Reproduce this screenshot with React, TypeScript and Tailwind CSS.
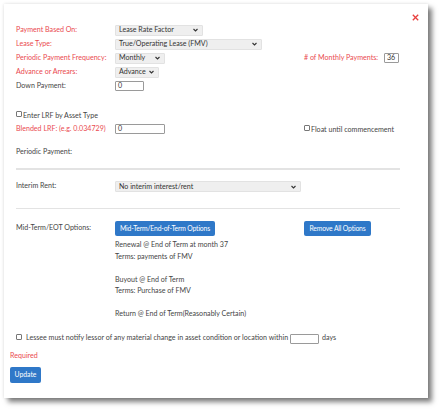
import React from "react";

const RED = "text-[#ea4a4f]";

function Chevron() {
  return (
    <svg width="5" height="4" viewBox="0 0 10 7" className="shrink-0">
      <path d="M1 1.5 L5 5.5 L9 1.5" fill="none" stroke="#333" strokeWidth="2.2" />
    </svg>
  );
}

function Select({ w, text }: { w: string; text: string }) {
  return (
    <div className={`${w} h-[11px] flex items-center justify-between gap-[2px] bg-[#efefef] border border-[#e2e2e2] rounded-[1px] pl-[3px] pr-[4px] text-[#333]`}>
      <span className="leading-none whitespace-nowrap">{text}</span>
      <Chevron />
    </div>
  );
}

function Input({ w, value }: { w: string; value?: string }) {
  return (
    <div className={`${w} h-[10px] flex items-center bg-white border border-[#9a9a9a] rounded-[1px] pl-[2px] text-[#333] leading-none`}>
      {value}
    </div>
  );
}

function Check() {
  return <div className="w-[6px] h-[6px] border border-[#777] rounded-[1px] bg-white shrink-0" />;
}

function Row({ label, red, children, h = "h-[14px]" }: { label: string; red?: boolean; children?: React.ReactNode; h?: string }) {
  return (
    <div className={`flex items-center ${h}`}>
      <div className={`w-[99px] shrink-0 whitespace-nowrap ${red ? RED : "text-[#454545]"}`}>{label}</div>
      {children}
    </div>
  );
}

function Button({ children, w }: { children: React.ReactNode; w: string }) {
  return (
    <div className={`${w} h-[15px] flex items-center justify-center bg-[#2f78c8] rounded-[2px] text-white text-[6.8px] whitespace-nowrap tracking-[-0.15px]`}>
      {children}
    </div>
  );
}

export default function App() {
  return (
    <div className="w-[440px] h-[410px] bg-white pt-[4px] pl-[4px]" style={{ fontFamily: "Lato, 'Open Sans', sans-serif" }}>
      <div className="relative w-[424px] h-[394px] bg-white shadow-[4px_4px_5px_rgba(0,0,0,0.5),0_0_3px_rgba(0,0,0,0.12)] text-[7.1px] text-[#454545] pl-[6px] pt-[19px]">
        <svg className="absolute right-[9px] top-[10px]" width="7" height="7" viewBox="0 0 7 7">
          <path d="M0.8 0.8 L6.2 6.2 M6.2 0.8 L0.8 6.2" stroke="#e8403f" strokeWidth="1.3" />
        </svg>
        <div className="pl-[6px] w-[390px]">
          <Row label="Payment Based On:" red>
            <Select w="w-[88px]" text="Lease Rate Factor" />
          </Row>
          <Row label="Lease Type:" red>
            <Select w="w-[147px]" text="True/Operating Lease (FMV)" />
          </Row>
          <div className="flex items-center h-[14px]">
            <div className="w-[288px] flex items-center">
              <div className={`w-[99px] whitespace-nowrap ${RED}`}>Periodic Payment Frequency:</div>
              <Select w="w-[50px]" text="Monthly" />
            </div>
            <div className={`${RED} w-[80px] whitespace-nowrap`}>
              # of Monthly Payments:
            </div>
            <Input w="w-[15px]" value="36" />
          </div>
          <Row label="Advance or Arrears:" red>
            <Select w="w-[44px]" text="Advance" />
          </Row>
          <Row label="Down Payment:">
            <Input w="w-[29px]" value="0" />
          </Row>
          <div className="h-[14px]" />
          <div className="flex items-end gap-[1px] h-[14px] pb-[2px]">
            <div className="mb-[2px]"><Check /></div>
            <span className="leading-none">Enter LRF by Asset Type</span>
          </div>
          <div className="flex items-center h-[16px]">
            <div className="w-[288px] flex items-center">
              <div className={`w-[99px] whitespace-nowrap ${RED}`}>Blended LRF: (e.g. 0.034729)</div>
              <Input w="w-[50px]" value="0" />
            </div>
            <div className="flex items-end gap-[1px]">
              <div className="mb-[2px]"><Check /></div>
              <span className="leading-none">Float until commencement</span>
            </div>
          </div>
          <div className="h-[8px]" />
          <Row label="Periodic Payment:" />
          <div className="h-[9px]" />
          <div className="h-[1.5px] w-[384px] bg-[#e3e3e3]" />
          <div className="h-[10px]" />
          <Row label="Interim Rent:">
            <Select w="w-[186px]" text="No interim interest/rent" />
          </Row>
          <div className="h-[14px]" />
          <div className="h-[1.5px] w-[384px] bg-[#e3e3e3]" />
          <div className="h-[12px]" />
          <div className="flex items-center h-[15px]">
            <div className="w-[288px] flex items-center">
              <div className="w-[99px] whitespace-nowrap">Mid-Term/EOT Options:</div>
              <Button w="w-[100px]">Mid-Term/End-of-Term Options</Button>
            </div>
            <Button w="w-[67px]">Remove All Options</Button>
          </div>
          <div className="pl-[99px] pt-[3px] leading-[11.5px] text-[#454545]">
            <div>Renewal @ End of Term at month 37</div>
            <div>Terms: payments of FMV</div>
            <div>&nbsp;</div>
            <div>Buyout @ End of Term</div>
            <div>Terms: Purchase of FMV</div>
            <div>&nbsp;</div>
            <div>Return @ End of Term(Reasonably Certain)</div>
          </div>
          <div className="h-[13px]" />
          <div className="flex items-center h-[12px] whitespace-nowrap">
            <div className="mb-[3px] mr-[4px]"><Check /></div>
            <span className="mr-[2px]">Lessee must notify lessor of any material change in asset condition or location within</span>
            <Input w="w-[29px]" />
            <span className="ml-[3px]">days</span>
          </div>
        </div>
        <div className={`${RED} h-[14px] flex items-center mt-[5px]`}>Required</div>
        <div className="h-[3px]" />
        <div className="w-[31px] h-[16px] flex items-center justify-center bg-[#2f78c8] rounded-[2px] text-white text-[6.8px]">
          Update
        </div>
      </div>
    </div>
  );
}
